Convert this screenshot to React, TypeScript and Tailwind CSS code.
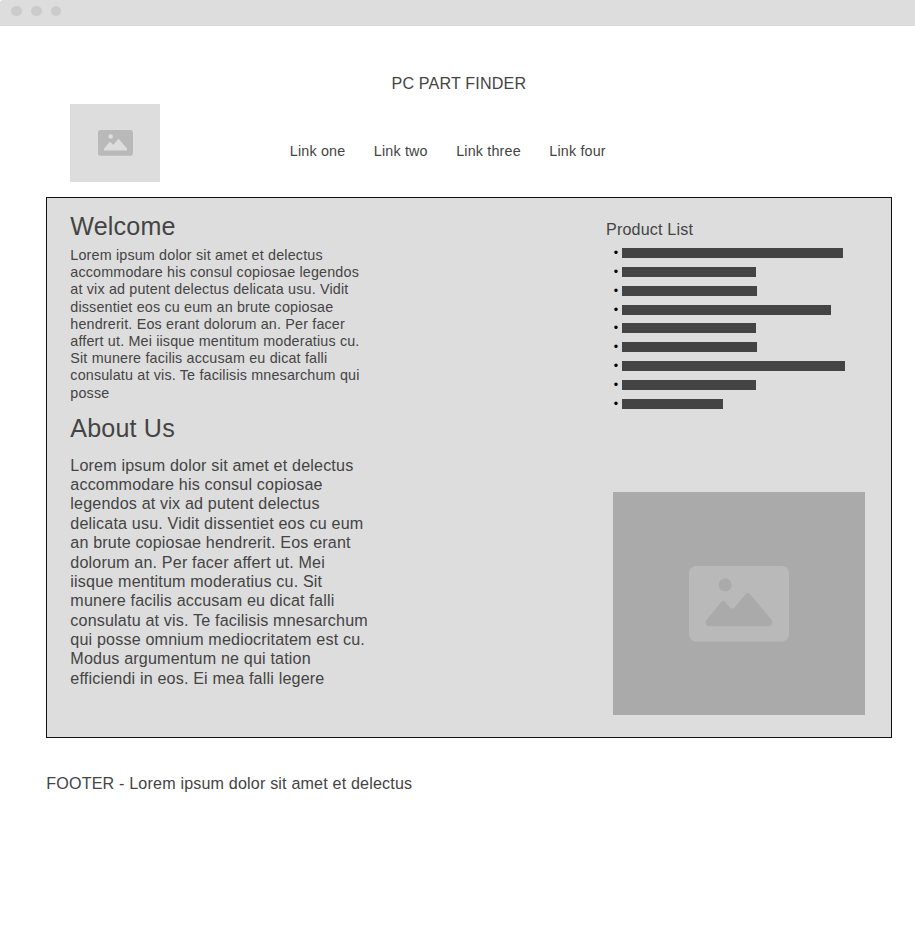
import React from "react";

const bars = [
  "w-[221px] mb-[9px]",
  "w-[134px] mb-[9px]",
  "w-[135px] mb-[9px]",
  "w-[209px] mb-[8px]",
  "w-[134px] mb-[9px]",
  "w-[135px] mb-[9px]",
  "w-[223px] mb-[9px]",
  "w-[134px] mb-[9px]",
  "w-[101px]",
];

const welcomeLines = [
  "Lorem ipsum dolor sit amet et delectus",
  "accommodare his consul copiosae legendos",
  "at vix ad putent delectus delicata usu. Vidit",
  "dissentiet eos cu eum an brute copiosae",
  "hendrerit. Eos erant dolorum an. Per facer",
  "affert ut. Mei iisque mentitum moderatius cu.",
  "Sit munere facilis accusam eu dicat falli",
  "consulatu at vis. Te facilisis mnesarchum qui",
  "posse",
];

const aboutLines = [
  "Lorem ipsum dolor sit amet et delectus",
  "accommodare his consul copiosae",
  "legendos at vix ad putent delectus",
  "delicata usu. Vidit dissentiet eos cu eum",
  "an brute copiosae hendrerit. Eos erant",
  "dolorum an. Per facer affert ut. Mei",
  "iisque mentitum moderatius cu. Sit",
  "munere facilis accusam eu dicat falli",
  "consulatu at vis. Te facilisis mnesarchum",
  "qui posse omnium mediocritatem est cu.",
  "Modus argumentum ne qui tation",
  "efficiendi in eos. Ei mea falli legere",
];

function Lines({ lines }: { lines: string[] }) {
  return (
    <>
      {lines.map((line) => (
        <span key={line} className="block whitespace-nowrap">
          {line}
        </span>
      ))}
    </>
  );
}

function ImageIcon({ className, cutout }: { className: string; cutout: string }) {
  return (
    <svg viewBox="0 0 100 76" preserveAspectRatio="none" className={className}>
      <rect width="100" height="75.6" rx="7" fill="#b9b9b9" />
      <circle cx="36.2" cy="18.8" r="6.5" fill={cutout} />
      <path
        d="M17.5 54 L32.3 36 Q34.3 33.7 36.3 36 L41 41.5 Q43.3 43.8 45.6 41.5 L56.7 28 Q58.8 25.5 60.9 28 L82.3 53.5 Q84 56 83 58.2 Q82 60.2 79.5 60.2 L20.5 60.2 Q17.7 60.2 16.9 58.2 Q16.2 56 17.5 54 Z"
        fill={cutout}
      />
    </svg>
  );
}

export default function App() {
  return (
    <div className="flex h-[941px] w-[915px] flex-col overflow-hidden bg-white font-['Liberation_Sans',Arial,sans-serif] text-[16.13px] leading-[19.36px] tracking-[0.168px] text-[#444]">
      <div className="flex h-[26px] shrink-0 gap-[9px] rounded-tl-[3px] bg-[#ddd] pt-[6px] pl-[11px]">
        <span className="h-[10px] w-[11px] rounded-full bg-[#cbcbcb]" />
        <span className="h-[10px] w-[11px] rounded-full bg-[#cbcbcb]" />
        <span className="h-[10px] w-[10px] rounded-full bg-[#cbcbcb]" />
      </div>

      <header className="h-[171px] shrink-0 pt-[48px]">
        <h1 className="h-[30px] pl-[391.5px] whitespace-nowrap">PC PART FINDER</h1>
        <div className="flex pl-[70px]">
          <div className="flex h-[78px] w-[90px] items-center justify-center bg-[#ddd]">
            <ImageIcon className="h-[26px] w-[35px]" cutout="#ddd" />
          </div>
          <nav className="ml-[129.8px] flex gap-[28.5px] pt-[39.2px] text-[14.34px] leading-[17.2px] whitespace-nowrap">
            <a>Link one</a>
            <a>Link two</a>
            <a>Link three</a>
            <a>Link four</a>
          </nav>
        </div>
      </header>

      <main className="ml-[46px] flex h-[541px] w-[846px] shrink-0 border border-[#111] bg-[#ddd]">
        <section className="w-[536px] pt-[13px] pl-[23.3px]">
          <h2 className="h-[35.9px] text-[25.1px] leading-[30px]">Welcome</h2>
          <p className="h-[166.4px] text-[14.34px] leading-[17.2px]">
            <Lines lines={welcomeLines} />
          </p>
          <h2 className="h-[42.45px] text-[25.1px] leading-[30px]">About Us</h2>
          <p>
            <Lines lines={aboutLines} />
          </p>
        </section>
        <aside className="flex w-[308px] flex-col pt-[22px] pl-[23px]">
          <h3 className="h-[28px] shrink-0">Product List</h3>
          <ul className="flex h-[244px] shrink-0 flex-col pl-[7.8px] text-[12.5px] leading-[10px]">
            {bars.map((bar, i) => (
              <li key={i} className="flex items-start">
                <span className="w-[8.2px] text-black">•</span>
                <span className={`h-[10px] bg-[#444] ${bar}`} />
              </li>
            ))}
          </ul>
          <div className="ml-[7px] flex h-[223px] w-[252px] items-center justify-center bg-[#aaa]">
            <ImageIcon className="h-[76px] w-[100px]" cutout="#aaa" />
          </div>
        </aside>
      </main>

      <footer className="pt-[36px] pl-[46.3px] whitespace-nowrap">
        FOOTER - Lorem ipsum dolor sit amet et delectus
      </footer>
    </div>
  );
}
